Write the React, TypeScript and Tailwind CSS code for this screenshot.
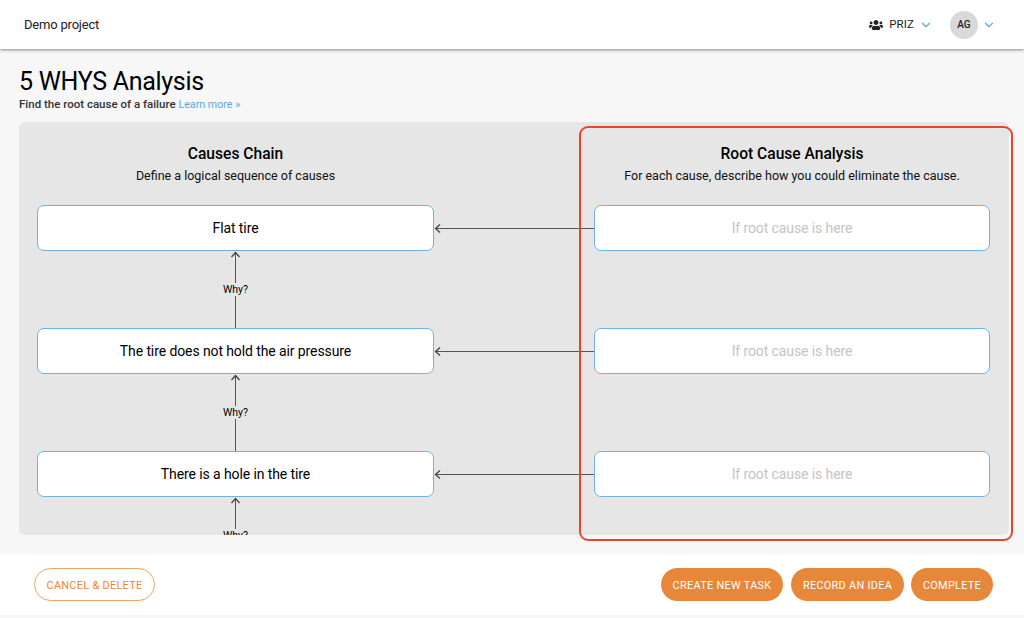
import { ChevronDown } from 'lucide-react';
import { FaUsers } from 'react-icons/fa';

const causes = ['Flat tire', 'The tire does not hold the air pressure', 'There is a hole in the tire'];

function WhyConnector({ clipped }: { clipped?: boolean }) {
  return (
    <div className={`w-[397px] flex flex-col items-center relative ${clipped ? 'h-[60px]' : 'h-[77px]'}`}>
      <svg width="11" height="77" viewBox="0 0 11 77" className="shrink-0">
        <path d="M5.5 1V77" stroke="#555555" strokeWidth="1" fill="none" />
        <path d="M1.5 6L5.5 1.5L9.5 6" stroke="#444444" strokeWidth="1.3" fill="none" />
      </svg>
      <span className="absolute top-[32px] left-1/2 -translate-x-1/2 text-[10.5px] leading-[13px] text-black bg-[#e6e6e6]">Why?</span>
    </div>
  );
}

function CauseRow({ label }: { label: string }) {
  return (
    <div className="flex items-center h-[46px]">
      <div className="w-[397px] h-full bg-white border border-[#6fb3e0] rounded-[7px] flex items-center justify-center text-[14px] tracking-[-0.1px] text-black">
        {label}
      </div>
      <svg width="160" height="11" viewBox="0 0 160 11" className="shrink-0">
        <path d="M1 5.5H160" stroke="#555555" strokeWidth="1" fill="none" />
        <path d="M6 1.5L1.5 5.5L6 9.5" stroke="#444444" strokeWidth="1.3" fill="none" />
      </svg>
      <div className="w-[396px] h-full bg-white border border-[#6fb3e0] rounded-[7px] flex items-center justify-center text-[14px] tracking-[-0.1px] text-[#c4c4c4]">
        If root cause is here
      </div>
    </div>
  );
}

export default function App() {
  return (
    <div className="h-[618px] w-[1024px] overflow-hidden flex flex-col bg-[#f7f7f7] font-['Roboto',sans-serif] relative">
      {/* Header */}
      <header className="h-[49px] shrink-0 bg-white shadow-[0_1px_3px_rgba(0,0,0,0.45)] flex items-center pl-[24px] pr-[28px] relative">
        <span className="text-[13px] tracking-[-0.2px] text-[#222222]">Demo project</span>
        <div className="ml-auto flex items-center">
          <FaUsers className="w-[14px] h-[14px] text-[#222222]" />
          <span className="ml-[6px] text-[11.5px] font-normal text-[#222222] tracking-[0.1px]">PRIZ</span>
          <ChevronDown className="ml-[5px] w-[14px] h-[14px] text-[#5aa9dc]" strokeWidth={2} />
          <div className="ml-[17px] w-[28px] h-[28px] rounded-full bg-[#d9d9d9] flex items-center justify-center text-[10px] font-medium text-[#222222]">AG</div>
          <ChevronDown className="ml-[4px] w-[14px] h-[14px] text-[#5aa9dc]" strokeWidth={2} />
        </div>
      </header>

      {/* Title */}
      <div className="h-[73px] shrink-0 pl-[19px] pt-[17px]">
        <h1 className="text-[25px] leading-[31px] tracking-[-0.3px] text-black">5 WHYS Analysis</h1>
        <p className="text-[11.5px] leading-[14px] font-medium text-[#333333]">
          Find the root cause of a failure <a className="text-[10.7px] text-[#5aa9dc] font-normal">Learn more »</a>
        </p>
      </div>

      {/* Panel */}
      <main className="mx-[19px] w-[990px] h-[413px] shrink-0 bg-[#e6e6e6] rounded-[6px] overflow-hidden pl-[18px] pt-[23px]">
        <div className="flex h-[60px]">
          <div className="w-[397px] text-center">
            <h2 className="text-[15.6px] leading-[18px] font-medium text-black">Causes Chain</h2>
            <p className="mt-[5px] text-[12.5px] leading-[15px] text-[#111111]">Define a logical sequence of causes</p>
          </div>
          <div className="w-[160px]" />
          <div className="w-[396px] text-center">
            <h2 className="text-[15.6px] leading-[18px] font-medium text-black">Root Cause Analysis</h2>
            <p className="mt-[5px] text-[12.5px] leading-[15px] text-[#111111]">For each cause, describe how you could eliminate the cause.</p>
          </div>
        </div>
        {causes.map((c, i) => (
          <div key={c}>
            <CauseRow label={c} />
            <WhyConnector clipped={i === causes.length - 1} />
          </div>
        ))}
      </main>

      {/* Red highlight over the analysis column */}
      <div className="absolute left-[579px] top-[126px] w-[434px] h-[415px] border-2 border-[#e8452c] rounded-[9px] pointer-events-none" />

      {/* Footer */}
      <footer className="mt-[19px] h-[61px] shrink-0 bg-white flex items-center pl-[34px] pr-[31px] text-[10.9px] font-normal tracking-[0.3px]">
        <button className="h-[33px] w-[121px] pt-[3px] rounded-full border border-[#f0a468] text-[#e8863a]">CANCEL &amp; DELETE</button>
        <button className="ml-auto h-[33px] w-[122px] pt-[3px] rounded-full bg-[#e6873a] text-white">CREATE NEW TASK</button>
        <button className="ml-[8px] h-[33px] w-[113px] pt-[3px] rounded-full bg-[#e6873a] text-white">RECORD AN IDEA</button>
        <button className="ml-[7px] h-[33px] w-[82px] pt-[3px] rounded-full bg-[#e6873a] text-white">COMPLETE</button>
      </footer>
    </div>
  );
}
